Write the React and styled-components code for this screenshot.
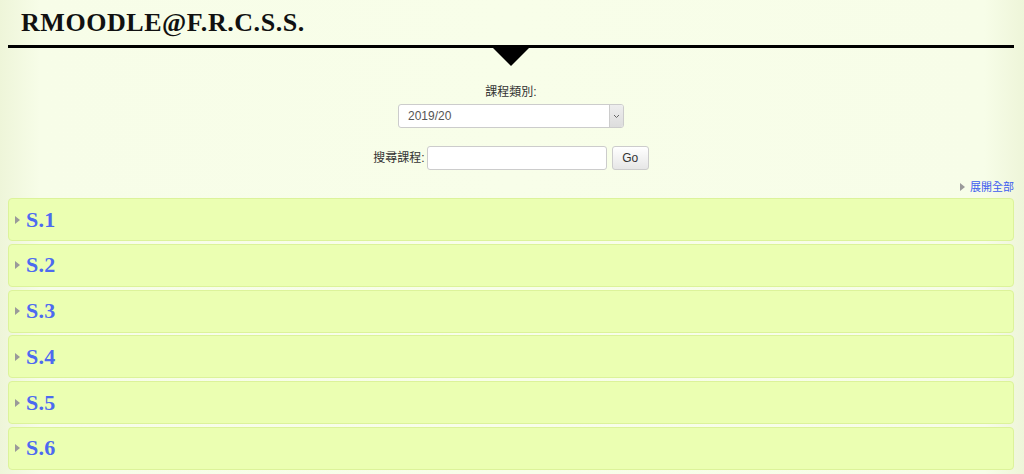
import React from "react";
import styled, { createGlobalStyle } from "styled-components";

const Global = createGlobalStyle`
  html, body { margin: 0; padding: 0; }
  body {
    background: linear-gradient(to right, #eef5d9 0px, #f7fde8 40px, #f8fee9 50%, #f7fde8 984px, #eef5d9 1024px);
    font-family: "Liberation Sans", "Noto Sans CJK TC", Arial, sans-serif;
    min-height: 474px;
  }
`;

const Page = styled.div`
  padding: 0 10px 0 8px;
`;

const Header = styled.header`
  position: relative;
  height: 45px;
  border-bottom: 3px solid #000;
  box-sizing: content-box;
`;

const Title = styled.h1`
  margin: 0;
  padding: 8px 0 0 13px;
  font-family: "Liberation Serif", "Times New Roman", serif;
  font-weight: bold;
  font-size: 26px;
  line-height: 30px;
  color: #111;
  letter-spacing: 0.55px;
`;

const Notch = styled.div`
  position: absolute;
  left: 50%;
  bottom: -21px;
  transform: translateX(-50%);
  width: 0;
  height: 0;
  border-left: 19px solid transparent;
  border-right: 19px solid transparent;
  border-top: 19px solid #000;
`;

const Form = styled.div`
  display: flex;
  flex-direction: column;
  align-items: center;
  padding-top: 36px;
`;

const Label = styled.label`
  font-size: 12px;
  color: #333;
  line-height: 16px;
`;

const SelectBox = styled.div`
  margin-top: 4px;
  width: 226px;
  height: 24px;
  box-sizing: border-box;
  border: 1px solid #ccc;
  border-radius: 3px;
  background: #fff;
  display: flex;
  align-items: center;
  font-size: 12px;
  color: #555;
  overflow: hidden;
`;

const SelectText = styled.span`
  flex: 1;
  padding-left: 9px;
`;

const SelectBtn = styled.span`
  width: 13px;
  height: 100%;
  border-left: 1px solid #ccc;
  background: linear-gradient(#eee, #ddd);
  display: flex;
  align-items: center;
  justify-content: center;
`;

const SearchRow = styled.div`
  margin-top: 18px;
  display: flex;
  align-items: center;
  gap: 2px;
`;

const Input = styled.input`
  width: 180px;
  height: 24px;
  box-sizing: border-box;
  border: 1px solid #ccc;
  border-radius: 3px;
  background: #fff;
  margin: 0;
`;

const GoBtn = styled.button`
  margin-left: 3px;
  width: 37px;
  height: 24px;
  box-sizing: border-box;
  border: 1px solid #ccc;
  border-radius: 3px;
  background: linear-gradient(#fff, #e6e6e6);
  font-family: "Liberation Sans", Arial, sans-serif;
  font-size: 12px;
  color: #333;
  padding: 0;
`;

const ExpandRow = styled.div`
  display: flex;
  justify-content: flex-end;
  align-items: center;
  margin-top: 9px;
  height: 16px;
  gap: 5px;
`;

const ExpandLink = styled.a`
  font-size: 11px;
  color: #3d5cf0;
  text-decoration: none;
  line-height: 16px;
`;

const Arrow = styled.span`
  width: 0;
  height: 0;
  border-top: 4.5px solid transparent;
  border-bottom: 4.5px solid transparent;
  border-left: 5px solid #9a9a9a;
`;

const List = styled.div`
  margin-top: 3px;
  display: flex;
  flex-direction: column;
  gap: 2.8px;
`;

const Section = styled.div`
  height: 43px;
  box-sizing: border-box;
  border: 1px solid #dcf39a;
  border-radius: 4px;
  background: #ebffb2;
  display: flex;
  align-items: center;
  padding-left: 6px;
  gap: 6px;
`;

const SectionName = styled.a`
  font-family: "Liberation Serif", "Times New Roman", serif;
  font-weight: bold;
  font-size: 22px;
  color: #4d6af0;
  text-decoration: none;
  line-height: 24px;
  letter-spacing: 0.3px;
`;

export default function App() {
  const sections = ["S.1", "S.2", "S.3", "S.4", "S.5", "S.6"];
  return (
    <Page>
      <Global />
      <Header>
        <Title>RMOODLE@F.R.C.S.S.</Title>
        <Notch />
      </Header>
      <Form>
        <Label>課程類別:</Label>
        <SelectBox>
          <SelectText>2019/20</SelectText>
          <SelectBtn>
            <svg width="7" height="5" viewBox="0 0 7 5">
              <path d="M1 1 L3.5 3.5 L6 1" fill="none" stroke="#666" strokeWidth="1" />
            </svg>
          </SelectBtn>
        </SelectBox>
        <SearchRow>
          <Label>搜尋課程:</Label>
          <Input />
          <GoBtn>Go</GoBtn>
        </SearchRow>
      </Form>
      <ExpandRow>
        <Arrow />
        <ExpandLink href="#">展開全部</ExpandLink>
      </ExpandRow>
      <List>
        {sections.map(s => (
          <Section key={s}>
            <Arrow />
            <SectionName href="#">{s}</SectionName>
          </Section>
        ))}
      </List>
    </Page>
  );
}
